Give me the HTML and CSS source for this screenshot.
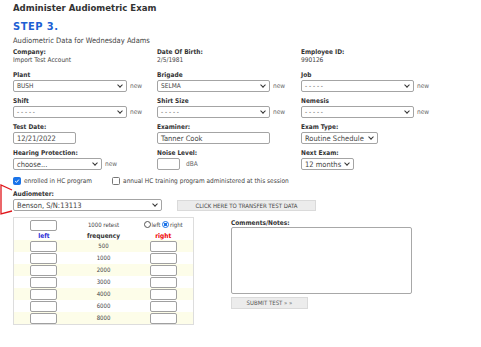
FILE: index.html
```html
<!DOCTYPE html>
<html>
  <head>
    <meta charset="UTF-8">
    <title>Administer Audiometric Exam</title>
    <link rel="stylesheet" href="styles.css">
  </head>
  <body>
    <h1 class="title">Administer Audiometric Exam</h1>
    <h2 class="step">STEP 3.</h2>
    <p class="sub">Audiometric Data for Wednesday Adams</p>

    <div class="grid">
      <div class="field info">
        <div class="lbl">Company:</div>
        <div class="val">Import Test Account</div>
      </div>
      <div class="field info">
        <div class="lbl">Date Of Birth:</div>
        <div class="val">2/5/1981</div>
      </div>
      <div class="field info">
        <div class="lbl">Employee ID:</div>
        <div class="val">990126</div>
      </div>

      <div class="field">
        <div class="lbl">Plant</div>
        <div class="ctl"><span class="sel w114">BUSH<i class="chev"></i></span><span class="new">new</span></div>
      </div>
      <div class="field">
        <div class="lbl">Brigade</div>
        <div class="ctl"><span class="sel w113">SELMA<i class="chev"></i></span><span class="new">new</span></div>
      </div>
      <div class="field">
        <div class="lbl">Job</div>
        <div class="ctl"><span class="sel w113">- - - - -<i class="chev"></i></span><span class="new">new</span></div>
      </div>

      <div class="field">
        <div class="lbl">Shift</div>
        <div class="ctl"><span class="sel w114">- - - - -<i class="chev"></i></span><span class="new">new</span></div>
      </div>
      <div class="field">
        <div class="lbl">Shirt Size</div>
        <div class="ctl"><span class="sel w113">- - - - -<i class="chev"></i></span><span class="new">new</span></div>
      </div>
      <div class="field">
        <div class="lbl">Nemesis</div>
        <div class="ctl"><span class="sel w113">- - - - -<i class="chev"></i></span><span class="new">new</span></div>
      </div>

      <div class="field">
        <div class="lbl">Test Date:</div>
        <div class="ctl"><span class="inp big w63">12/21/2022</span></div>
      </div>
      <div class="field">
        <div class="lbl">Examiner:</div>
        <div class="ctl"><span class="inp big w113">Tanner Cook</span></div>
      </div>
      <div class="field">
        <div class="lbl">Exam Type:</div>
        <div class="ctl"><span class="sel big w77">Routine Schedule<i class="chev"></i></span></div>
      </div>

      <div class="field">
        <div class="lbl">Hearing Protection:</div>
        <div class="ctl"><span class="sel big w89">choose...<i class="chev"></i></span><span class="new">new</span></div>
      </div>
      <div class="field">
        <div class="lbl">Noise Level:</div>
        <div class="ctl"><span class="inp w23"></span><span class="unit">dBA</span></div>
      </div>
      <div class="field">
        <div class="lbl">Next Exam:</div>
        <div class="ctl"><span class="sel big w53">12 months<i class="chev"></i></span></div>
      </div>
    </div>

    <div class="checks">
      <span class="cb on"><svg viewBox="0 0 8 8" width="8" height="8"><path d="M1.6 4.2 L3.3 5.8 L6.4 2.2" fill="none" stroke="#fff" stroke-width="1.3"/></svg></span>
      <span class="cbtext">enrolled in HC program</span>
      <span class="cb"></span>
      <span class="cbtext">annual HC training program administered at this session</span>
    </div>

    <div class="lbl audlbl">Audiometer:</div>
    <div class="audrow">
      <span class="sel big w149">Benson, S/N:13113<i class="chev"></i></span>
      <span class="xfer">CLICK HERE TO TRANSFER TEST DATA</span>
    </div>

    <div class="data">
      <table class="freq">
        <tr class="h1">
          <td><span class="tin"></span></td>
          <td>1000 retest</td>
          <td><span class="radio"></span>left <span class="radio on"></span>right</td>
        </tr>
        <tr class="h2">
          <td class="lft">left</td>
          <td class="frq">frequency</td>
          <td class="rgt">right</td>
        </tr>
        <tr class="alt"><td><span class="tin"></span></td><td>500</td><td><span class="tin"></span></td></tr>
        <tr><td><span class="tin"></span></td><td>1000</td><td><span class="tin"></span></td></tr>
        <tr class="alt"><td><span class="tin"></span></td><td>2000</td><td><span class="tin"></span></td></tr>
        <tr><td><span class="tin"></span></td><td>3000</td><td><span class="tin"></span></td></tr>
        <tr class="alt"><td><span class="tin"></span></td><td>4000</td><td><span class="tin"></span></td></tr>
        <tr><td><span class="tin"></span></td><td>6000</td><td><span class="tin"></span></td></tr>
        <tr class="alt"><td><span class="tin"></span></td><td>8000</td><td><span class="tin"></span></td></tr>
      </table>

      <div class="notes">
        <div class="lbl">Comments/Notes:</div>
        <div class="area"></div>
        <span class="submit">SUBMIT TEST &raquo; &raquo;</span>
      </div>
    </div>

    <!-- red annotation mark -->
    <svg class="mark" width="16" height="34" viewBox="0 0 16 34">
      <polyline points="12,6 1,1 1,30 12,27" fill="none" stroke="#e0161b" stroke-width="1.3"/>
    </svg>
  </body>
</html>
```

FILE: styles.css
```css
body {
margin: 0;
padding: 2px 12px 0 13px;
font-family: "DejaVu Sans", Verdana, sans-serif;
font-stretch: condensed;
color: #333;
background: #fff;
position: relative;
}

.title {
margin: 0;
font-size: 9.5px;
line-height: 12px;
font-weight: bold;
color: #333;
}

.step {
margin: 6px 0 0;
font-family: "DejaVu Sans", sans-serif;
font-size: 11px;
line-height: 13px;
font-weight: 900;
color: #1d5fd3;
letter-spacing: 0.5px;
}

.sub {
margin: 3px 0 0;
font-size: 7.5px;
line-height: 10px;
color: #444;
}

.grid {
display: grid;
grid-template-columns: 144px 144px 1fr;
row-gap: 5px;
margin-top: 2px;
}

.field {
height: 21px;
}

.lbl {
font-size: 6.5px;
line-height: 8px;
font-weight: bold;
color: #333;
}

.val {
font-size: 6.5px;
line-height: 9px;
color: #444;
}

.field.info {
height: 18px;
}

.ctl {
display: flex;
align-items: center;
height: 12px;
margin-top: 1px;
}

.sel, .inp {
display: flex;
align-items: center;
justify-content: space-between;
box-sizing: border-box;
height: 12px;
padding: 0 3px;
border: 1px solid #a4a4a4;
border-radius: 2px;
font-size: 6.5px;
color: #444;
background: #fff;
}

.big {
font-size: 7.5px;
}

.chev {
width: 3px;
height: 3px;
border-right: 1px solid #333;
border-bottom: 1px solid #333;
transform: rotate(45deg);
margin: 0 1px 2px 0;
}

.w23 { width: 23px; }
.w53 { width: 53px; }
.w63 { width: 63px; }
.w77 { width: 77px; }
.w89 { width: 89px; }
.w113 { width: 113px; }
.w114 { width: 114px; }
.w149 { width: 149px; }

.new, .unit {
font-size: 6.5px;
color: #666;
margin-left: 3px;
}

.unit {
margin-left: 6px;
}

.checks {
display: flex;
align-items: center;
height: 10px;
margin-top: 6px;
font-size: 6.5px;
color: #444;
}

.cb {
display: inline-flex;
align-items: center;
justify-content: center;
box-sizing: border-box;
width: 8px;
height: 8px;
border: 1px solid #777;
border-radius: 1.5px;
}

.cb.on {
background: #1a73e8;
border-color: #1a73e8;
}

.cbtext {
margin-left: 3px;
margin-right: 20px;
}

.audlbl {
margin-top: 4px;
}

.audrow {
display: flex;
align-items: flex-end;
height: 13px;
margin-top: 0px;
}

.xfer {
box-sizing: border-box;
width: 139px;
height: 11px;
margin-left: 15px;
background: #ececec;
border: 1px solid #dadada;
font-size: 6px;
line-height: 9px;
text-align: center;
color: #444;
}

.data {
display: flex;
align-items: flex-start;
margin-top: 6px;
}

.freq {
border-collapse: collapse;
width: 181px;
border: 1px solid #ddd;
font-size: 6px;
line-height: 8px;
color: #444;
}

.freq td {
width: 60px;
height: 12px;
padding: 0;
text-align: center;
vertical-align: middle;
}

.freq .h1 td {
height: 14px;
}

.freq .h2 td {
height: 8px;
font-weight: bold;
font-size: 6.5px;
line-height: 8px;
}

.lft { color: #2b2bd6; }
.frq { color: #333; }
.rgt { color: #e00; }

.freq .alt td {
background: #fdfde9;
}

.tin {
display: block;
box-sizing: border-box;
width: 27px;
height: 11px;
margin: 0 auto;
border: 1px solid #a0a0a0;
border-radius: 2px;
background: #fff;
}

.radio {
display: inline-block;
box-sizing: border-box;
width: 7px;
height: 7px;
border: 1px solid #555;
border-radius: 50%;
vertical-align: -1px;
margin-right: 1px;
background: #fff;
}

.radio.on {
border-color: #1a73e8;
background: radial-gradient(circle, #1a73e8 45%, #fff 55%);
}

.notes {
margin-left: 37px;
margin-top: 2px;
}

.area {
box-sizing: border-box;
width: 181px;
height: 67px;
margin-top: 0px;
border: 1px solid #a8a8a8;
border-radius: 2px;
background: #fff;
}

.submit {
display: block;
box-sizing: border-box;
width: 77px;
height: 12px;
margin-top: 3px;
background: #ececec;
border: 1px solid #dadada;
font-size: 6px;
line-height: 10px;
text-align: center;
color: #555;
}

.mark {
position: absolute;
left: 0;
top: 184px;
}
```
